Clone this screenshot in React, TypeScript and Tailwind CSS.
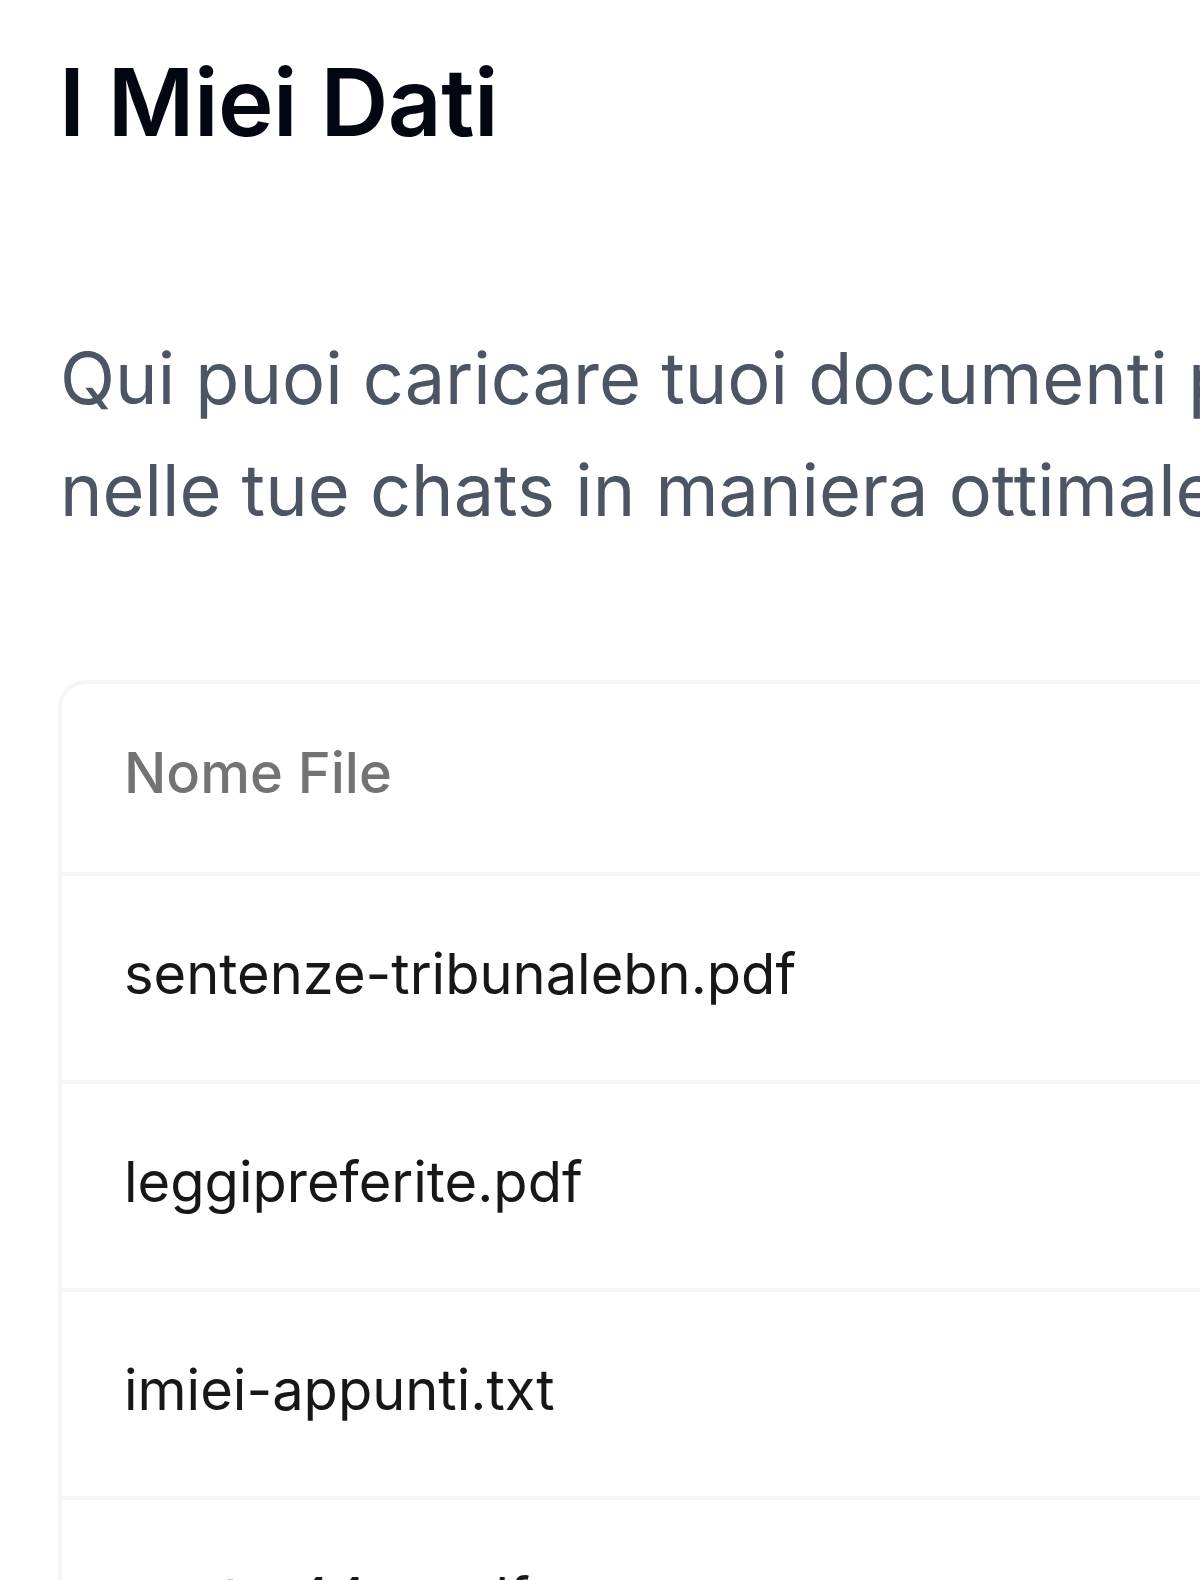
import React from "react";

const files = [
  "sentenze-tribunalebn.pdf",
  "leggipreferite.pdf",
  "imiei-appunti.txt",
  "contro44-a.pdf",
  "documento-finale.pdf",
];

export default function App() {
  return (
    <div
      className="w-[1200px] h-[1580px] overflow-hidden bg-white"
      style={{ fontFamily: "Inter, 'Noto Sans', sans-serif" }}
    >
      <div className="w-[1900px] pt-[38px] pl-[58px]">
        <h1 className="pl-[1px] text-[94px] leading-[128px] font-semibold text-[#030712] tracking-[-0.5px]">
          I Miei Dati
        </h1>
        <p className="mt-[156px] pl-[2px] text-[72px] leading-[112px] text-[#4b5563] whitespace-nowrap">
          Qui puoi caricare tuoi documenti per poterli utilizzare
          <br />
          nelle tue chats in maniera ottimale.
        </p>
        <div className="mt-[134px] w-[1800px] rounded-[28px] border-4 border-[#f5f5f5] bg-white overflow-hidden">
          <div className="h-[192px] flex items-center px-[62px] pb-[10px] border-b-4 border-[#f5f5f5]">
            <span className="text-[56px] leading-[80px] font-medium text-[#737373]">
              Nome File
            </span>
          </div>
          {files.map((f) => (
            <div
              key={f}
              className="h-[208px] flex items-center px-[62px] pb-[8px] border-b-4 border-[#f5f5f5]"
            >
              <span className="text-[56px] leading-[80px] text-[#171717]">{f}</span>
            </div>
          ))}
        </div>
      </div>
    </div>
  );
}
